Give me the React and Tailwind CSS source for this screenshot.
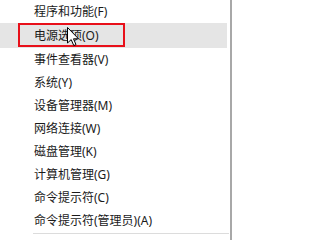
// App.jsx - Win+X context menu crop
const items = [
  "程序和功能(F)",
  "电源选项(O)",
  "事件查看器(V)",
  "系统(Y)",
  "设备管理器(M)",
  "网络连接(W)",
  "磁盘管理(K)",
  "计算机管理(G)",
  "命令提示符(C)",
  "命令提示符(管理员)(A)",
];

const Cursor = () => (
  <svg
    className="absolute left-[67px] top-[27px]"
    width="13"
    height="20"
    viewBox="0 0 13 20"
  >
    <path
      d="M0.5 0.5 L0.5 16 L4.2 12.6 L6.8 18.6 L9 17.6 L6.5 11.8 L11.5 11.8 Z"
      fill="#fff"
      stroke="#000"
      strokeWidth="1"
      strokeLinejoin="miter"
    />
  </svg>
);

export default function App() {
  return (
    <div
      className="relative w-[232px] h-[240px] bg-white overflow-hidden text-[12px] text-[#1a1a1a]"
      style={{ fontFamily: '"Noto Sans", "Noto Sans CJK SC", sans-serif' }}
    >
      <div className="flex flex-col w-[232px] h-[240px] border-r-2 border-[#a8a8a8]">
        {items.map((label, i) => (
          <div
            key={label}
            className={
              i === 1
                ? "flex items-center h-[25px] pl-[34px] mr-[3px] bg-[#e5e5e5]"
                : "flex items-center h-[23px] pl-[34px]"
            }
          >
            {label}
          </div>
        ))}
        <div className="mt-[1px] ml-[33px] mr-[1px] h-px bg-[#dcdcdc]" />
      </div>

      {/* annotation box */}
      <div className="absolute left-[18px] top-[23px] w-[107px] h-[24px] border-2 border-[#e8101a]" />
      <Cursor />
    </div>
  );
}
